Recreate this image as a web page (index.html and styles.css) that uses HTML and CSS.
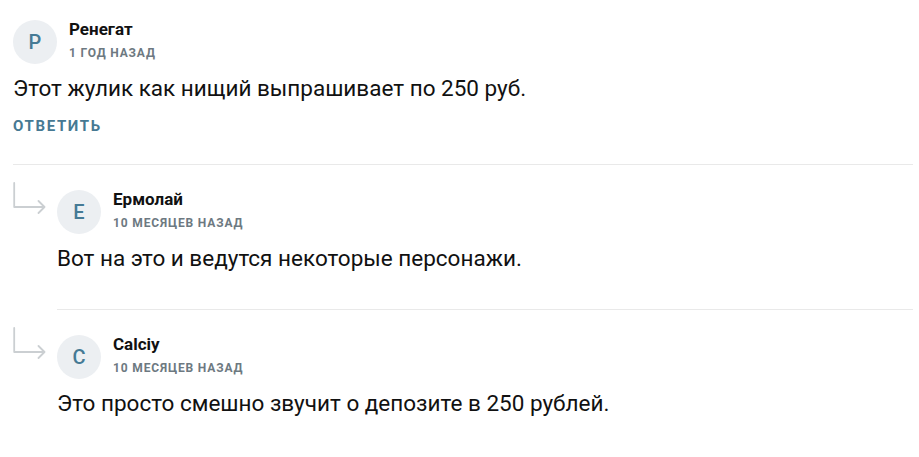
FILE: index.html
```html
<!DOCTYPE html>
<html lang="ru">
<head>
<meta charset="utf-8">
<link rel="stylesheet" href="styles.css">
</head>
<body>
<div class="thread">
  <div class="comment">
    <div class="head">
      <div class="avatar">Р</div>
      <div class="meta">
        <div class="name">Ренегат</div>
        <div class="date">1 год назад</div>
      </div>
    </div>
    <p class="text">Этот жулик как нищий выпрашивает по 250 руб.</p>
    <a class="reply-link">Ответить</a>
  </div>
  <div class="replies">
    <div class="reply">
      <svg class="arrow" width="33" height="32" viewBox="0 0 33 32"><path d="M1.2 1 V25 H31 M25.5 19 L31.5 25 L25.5 31" fill="none" stroke="#cbcfd2" stroke-width="1.8" stroke-linecap="round" stroke-linejoin="round"/></svg>
      <div class="reply-body">
        <div class="head">
          <div class="avatar">Е</div>
          <div class="meta">
            <div class="name">Ермолай</div>
            <div class="date">10 месяцев назад</div>
          </div>
        </div>
        <p class="text">Вот на это и ведутся некоторые персонажи.</p>
      </div>
    </div>
    <div class="reply">
      <svg class="arrow" width="33" height="32" viewBox="0 0 33 32"><path d="M1.2 1 V25 H31 M25.5 19 L31.5 25 L25.5 31" fill="none" stroke="#cbcfd2" stroke-width="1.8" stroke-linecap="round" stroke-linejoin="round"/></svg>
      <div class="reply-body">
        <div class="head">
          <div class="avatar">C</div>
          <div class="meta">
            <div class="name">Calciy</div>
            <div class="date">10 месяцев назад</div>
          </div>
        </div>
        <p class="text">Это просто смешно звучит о депозите в 250 рублей.</p>
      </div>
    </div>
  </div>
</div>
</body>
</html>
```
FILE: styles.css
```css
* { box-sizing: border-box; }
body {
  margin: 0;
  background: #fff;
  font-family: Roboto, "Noto Sans", sans-serif;
  color: #111;
}
.thread {
  padding: 20px 6px 0 13px;
}
.head {
  display: flex;
  align-items: flex-start;
  gap: 12px;
}
.avatar {
  width: 44px;
  height: 44px;
  border-radius: 50%;
  background: #eceff2;
  color: #457a95;
  display: flex;
  align-items: center;
  justify-content: center;
  font-size: 20px;
  font-weight: 500;
  flex: none;
}
.meta {
  display: flex;
  flex-direction: column;
  gap: 7px;
  margin-top: -1px;
}
.name {
  font-size: 17px;
  line-height: 20px;
  font-weight: 700;
  color: #111;
}
.date {
  font-size: 12px;
  line-height: 14px;
  font-weight: 700;
  text-transform: uppercase;
  color: #6d7981;
  letter-spacing: 0.85px;
}
.text {
  margin: 10px 0 0;
  font-size: 22.5px;
  line-height: 28px;
}
.reply-link {
  display: block;
  width: fit-content;
  margin-top: 15px;
  font-size: 15px;
  line-height: 18px;
  font-weight: 700;
  text-transform: uppercase;
  letter-spacing: 1.65px;
  color: #467993;
}
.comment {
  padding-bottom: 29px;
  border-bottom: 1px solid #e9e9e9;
}
.reply {
  display: flex;
  gap: 11px;
}
.arrow {
  flex: none;
  margin-top: 17px;
}
.reply-body {
  flex: 1;
  padding-top: 25px;
  padding-bottom: 37px;
  border-bottom: 1px solid #e9e9e9;
}
.reply:last-child .reply-body {
  border-bottom: none;
}
```
